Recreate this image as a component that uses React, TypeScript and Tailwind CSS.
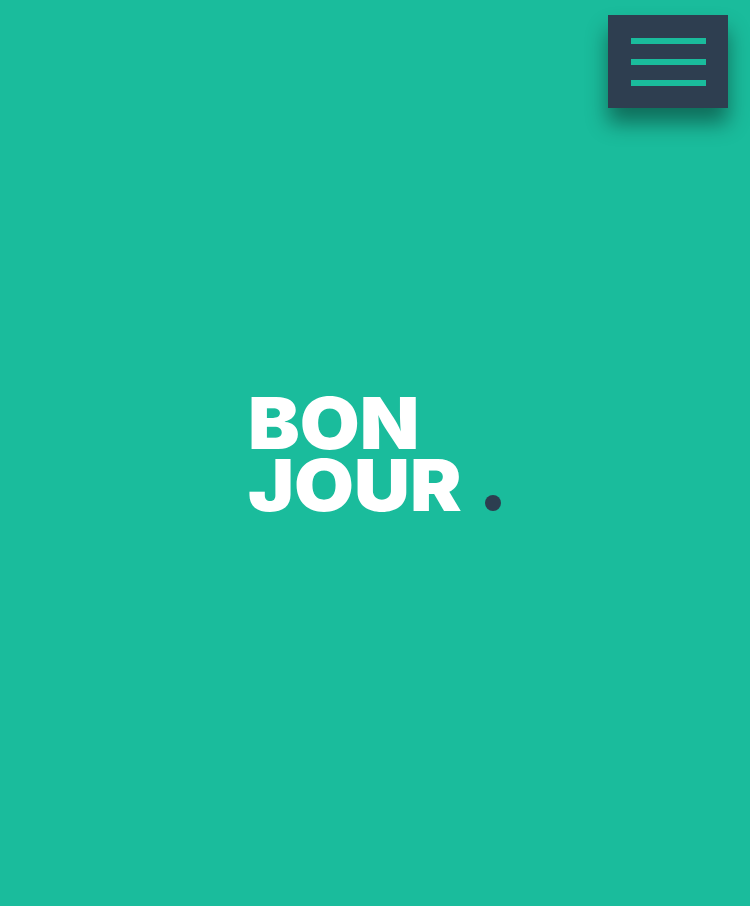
import React from "react";

export default function App() {
  return (
    <div className="relative w-full h-[906px] bg-[#1abc9c] overflow-hidden">
      <button className="absolute top-[15px] left-[608px] w-[120px] h-[93px] bg-[#2e3e50] flex flex-col items-center justify-center gap-[15px] shadow-[0_15px_20px_rgba(0,0,0,0.42)]">
        <span className="block w-[75px] h-[6px] bg-[#1abc9c]" />
        <span className="block w-[75px] h-[6px] bg-[#1abc9c]" />
        <span className="block w-[75px] h-[6px] bg-[#1abc9c]" />
      </button>
      <div className="h-full flex items-center justify-center">
        <div className="flex items-end translate-y-[1px] translate-x-[-1px]">
          <h1 className="w-[212px] text-white font-black text-[72px] tracking-[0px] font-['Inter',sans-serif] origin-left scale-x-[1.075]">
            <div className="leading-[62px] h-[62px]">BON</div>
            <div className="leading-[62px] h-[62px]">JOUR</div>
          </h1>
          <span className="block w-[16px] h-[16px] rounded-full bg-[#2c3e50] ml-[25px] mb-[5px]" />
        </div>
      </div>
    </div>
  );
}
